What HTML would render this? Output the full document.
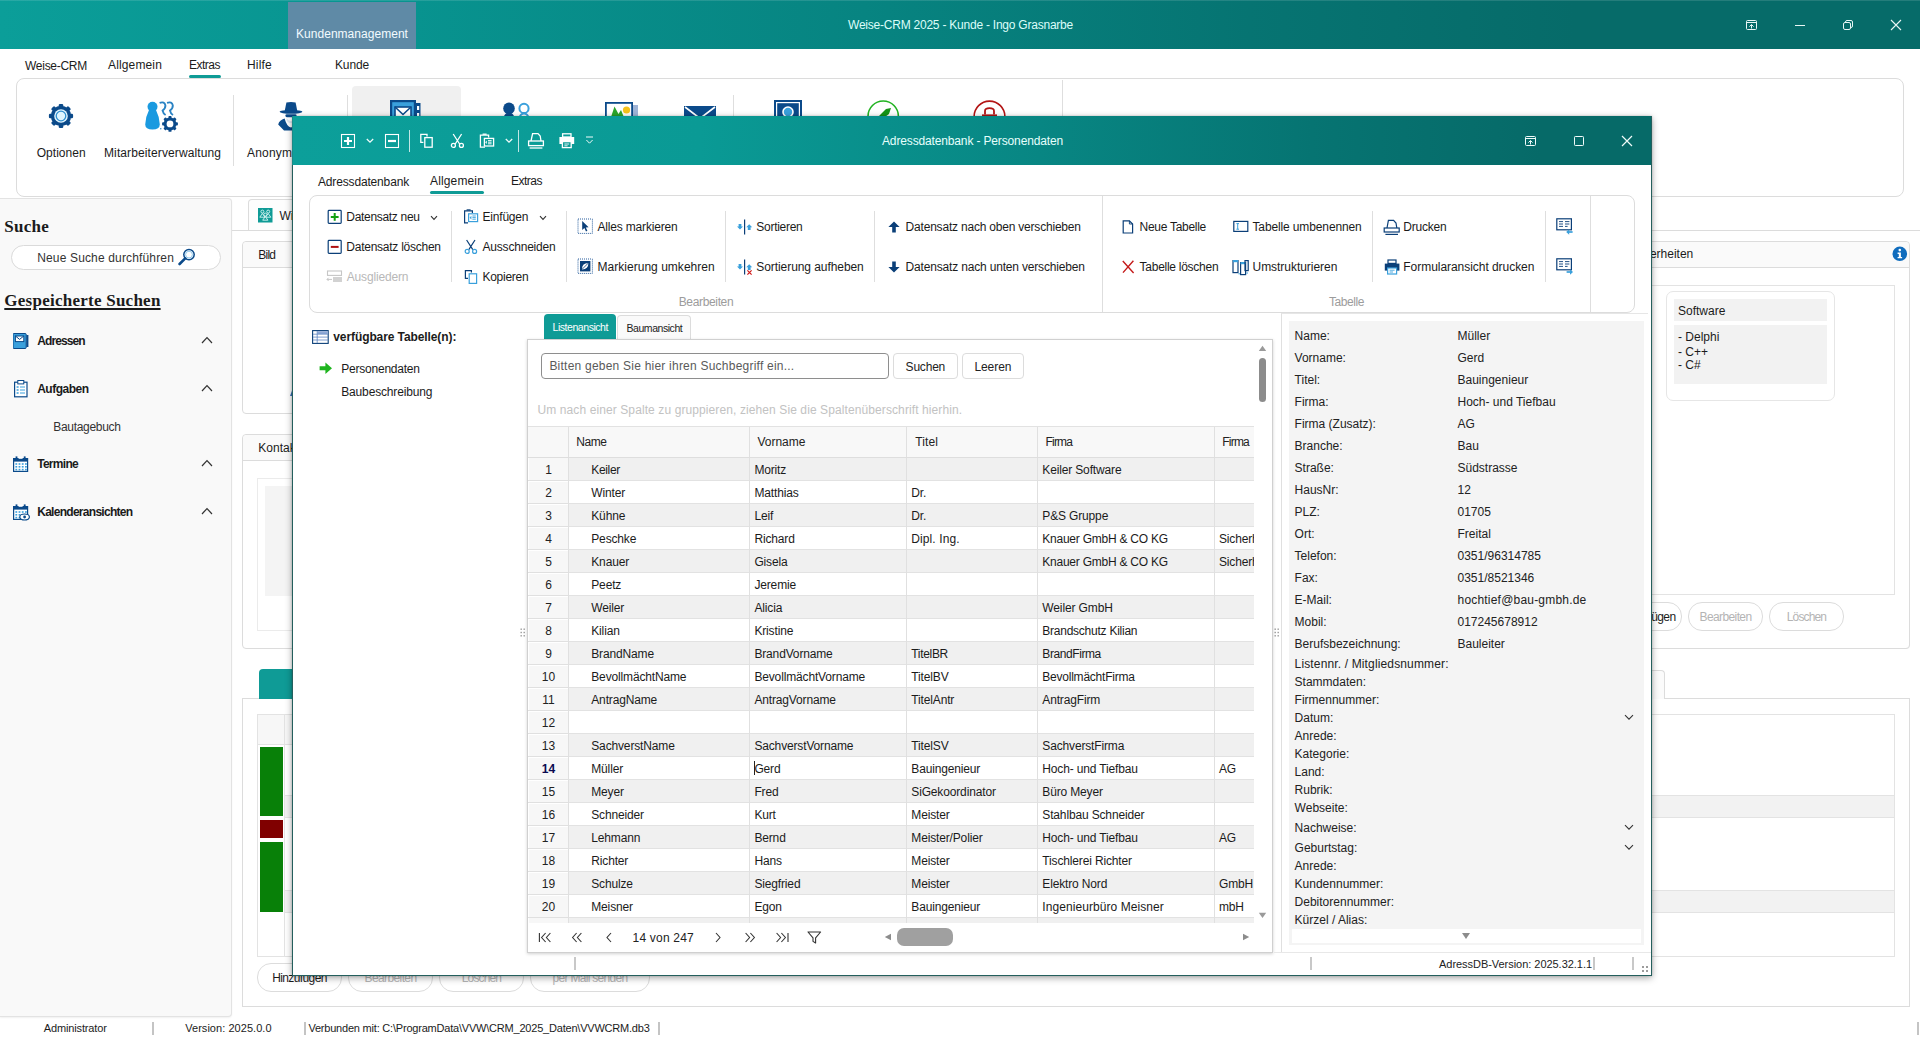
<!DOCTYPE html>
<html lang="de"><head><meta charset="utf-8"><title>Weise-CRM 2025 - Kunde - Ingo Grasnarbe</title>
<style>
html,body{margin:0;padding:0;background:#fff}
body{width:1920px;height:1040px;position:relative;overflow:hidden;font-family:'Liberation Sans', sans-serif;font-size:12px}
div,svg,span.t{position:absolute;box-sizing:border-box}
span.t{white-space:pre;line-height:20px}

</style></head>
<body>
<div style="left:0px;top:0px;width:1920px;height:49px;background:linear-gradient(90deg,#0b9e99 0%,#089490 20%,#078481 45%,#067472 65%,#066b69 82%,#066b69 100%)"></div>
<div style="left:0px;top:0px;width:1920px;height:1px;background:rgba(255,255,255,.12)"></div>
<div style="left:288px;top:2px;width:128px;height:47px;background:#5f8aa6"></div>
<span class="t" style="left:296.00px;top:24.00px;font-size:12px;color:#f2fbff;letter-spacing:0.036px;">Kundenmanagement</span>
<span class="t" style="left:848.00px;top:15.00px;font-size:12px;color:#dcfdf9;letter-spacing:-0.228px;">Weise-CRM 2025 - Kunde - Ingo Grasnarbe</span>
<svg style="left:1745px;top:19px" width="13" height="12" viewBox="0 0 13 12"><rect x="1.5" y="1.5" width="10" height="9" rx="1" stroke="#e8f6f5" fill="none" stroke-width="1"/><line x1="1.5" y1="3.5" x2="11.5" y2="3.5" stroke="#e8f6f5" fill="none" stroke-width="1"/><path d="M6.5 9.5 V5.8 M4.4 7.6 L6.5 5.5 L8.6 7.6" stroke="#e8f6f5" fill="none" stroke-width="1"/></svg>
<div style="left:1795px;top:25px;width:10px;height:1px;background:#e8f6f5"></div>
<svg style="left:1842px;top:19px" width="12" height="12" viewBox="0 0 12 12"><rect x="1.5" y="3.5" width="7" height="7" rx="1.5" stroke="#e8f6f5" fill="none" stroke-width="1"/><path d="M3.5 3.5 V3 Q3.5 1.5 5 1.5 H9 Q10.5 1.5 10.5 3 V7 Q10.5 8.5 9 8.5 H8.5" stroke="#e8f6f5" fill="none" stroke-width="1"/></svg>
<svg style="left:1890px;top:19px" width="12" height="12" viewBox="0 0 12 12"><path d="M1 1 L11 11 M11 1 L1 11" stroke="#e8f6f5" fill="none" stroke-width="1" style="stroke-width:1.1"/></svg>
<span class="t" style="left:25.00px;top:56.00px;font-size:12px;color:#1b1b1b;letter-spacing:-0.273px;">Weise-CRM</span>
<span class="t" style="left:108.00px;top:55.00px;font-size:12px;color:#1b1b1b;letter-spacing:0.144px;">Allgemein</span>
<span class="t" style="left:189.00px;top:55.00px;font-size:12px;color:#1b1b1b;letter-spacing:-0.503px;">Extras</span>
<div style="left:189px;top:75px;width:32px;height:3px;background:#0f9b96;border-radius:2px"></div>
<span class="t" style="left:247.00px;top:55.00px;font-size:12px;color:#1b1b1b;letter-spacing:0.197px;">Hilfe</span>
<span class="t" style="left:335.00px;top:55.00px;font-size:12px;color:#1b1b1b;letter-spacing:-0.141px;">Kunde</span>
<div style="left:16px;top:78px;width:1888px;height:119px;border:1px solid #dcdcdc;border-radius:8px;background:#fff"></div>
<div style="left:233px;top:95px;width:1px;height:71px;background:#dedede"></div>
<div style="left:347px;top:95px;width:1px;height:71px;background:#dedede"></div>
<div style="left:733px;top:95px;width:1px;height:71px;background:#dedede"></div>
<div style="left:1062px;top:80px;width:1px;height:116px;background:#dedede"></div>
<div style="left:352px;top:86px;width:109px;height:80px;background:#f0f0f0;border-radius:4px"></div>
<svg style="left:47px;top:102px" width="28" height="28" viewBox="0 0 28 28"><circle cx="14" cy="14" r="10.2" fill="#0b4a8a"/><rect x="11.70" y="1.90" width="4.60" height="3.40" rx="1.29" fill="#0b4a8a" transform="rotate(0.0 14 14)"/><rect x="11.70" y="1.90" width="4.60" height="3.40" rx="1.29" fill="#0b4a8a" transform="rotate(45.0 14 14)"/><rect x="11.70" y="1.90" width="4.60" height="3.40" rx="1.29" fill="#0b4a8a" transform="rotate(90.0 14 14)"/><rect x="11.70" y="1.90" width="4.60" height="3.40" rx="1.29" fill="#0b4a8a" transform="rotate(135.0 14 14)"/><rect x="11.70" y="1.90" width="4.60" height="3.40" rx="1.29" fill="#0b4a8a" transform="rotate(180.0 14 14)"/><rect x="11.70" y="1.90" width="4.60" height="3.40" rx="1.29" fill="#0b4a8a" transform="rotate(225.0 14 14)"/><rect x="11.70" y="1.90" width="4.60" height="3.40" rx="1.29" fill="#0b4a8a" transform="rotate(270.0 14 14)"/><rect x="11.70" y="1.90" width="4.60" height="3.40" rx="1.29" fill="#0b4a8a" transform="rotate(315.0 14 14)"/><circle cx="14" cy="14" r="6.8" fill="#e4f6ff"/><circle cx="14" cy="14" r="4.8" fill="#dff5ff" stroke="#2f8fd0" stroke-width="1.3"/></svg>
<span class="t" style="left:36.70px;top:143.00px;font-size:12px;color:#1b1b1b;letter-spacing:0.037px;">Optionen</span>
<svg style="left:144px;top:100px" width="36" height="34" viewBox="0 0 36 34"><circle cx="8.5" cy="6.8" r="5" fill="#1a9ae0"/><path d="M5.2 9.5 Q8.5 12 11.8 9.5 Q15.6 17 15.8 24.5 Q15.6 29.6 8.5 29.6 Q1.4 29.6 1.2 24.5 Q1.4 17 5.2 9.5 Z" fill="#1a9ae0"/><path d="M15.6 2.9 Q20.6 1.2 21.4 5.4 Q21.6 8.4 18.6 10.6 Q19.2 13.6 21.6 15" fill="none" stroke="#2a83c4" stroke-width="1.9"/><path d="M23 2.9 Q28 1.2 28.8 5.4 Q29 8.4 26 10.6 Q26.6 13.6 29 15" fill="none" stroke="#2a83c4" stroke-width="1.9"/><circle cx="26" cy="23.9" r="6.4" fill="#0b4a8a"/><rect x="24.45" y="16.00" width="3.10" height="3.00" rx="0.87" fill="#0b4a8a" transform="rotate(0.0 26 23.9)"/><rect x="24.45" y="16.00" width="3.10" height="3.00" rx="0.87" fill="#0b4a8a" transform="rotate(45.0 26 23.9)"/><rect x="24.45" y="16.00" width="3.10" height="3.00" rx="0.87" fill="#0b4a8a" transform="rotate(90.0 26 23.9)"/><rect x="24.45" y="16.00" width="3.10" height="3.00" rx="0.87" fill="#0b4a8a" transform="rotate(135.0 26 23.9)"/><rect x="24.45" y="16.00" width="3.10" height="3.00" rx="0.87" fill="#0b4a8a" transform="rotate(180.0 26 23.9)"/><rect x="24.45" y="16.00" width="3.10" height="3.00" rx="0.87" fill="#0b4a8a" transform="rotate(225.0 26 23.9)"/><rect x="24.45" y="16.00" width="3.10" height="3.00" rx="0.87" fill="#0b4a8a" transform="rotate(270.0 26 23.9)"/><rect x="24.45" y="16.00" width="3.10" height="3.00" rx="0.87" fill="#0b4a8a" transform="rotate(315.0 26 23.9)"/><circle cx="26" cy="23.9" r="3.4" fill="#fff"/><circle cx="16.8" cy="28.8" r="0.7" fill="#2a83c4"/></svg>
<span class="t" style="left:104.00px;top:143.00px;font-size:12px;color:#1b1b1b;letter-spacing:0.109px;">Mitarbeiterverwaltung</span>
<svg style="left:276px;top:100px" width="30" height="34" viewBox="0 0 30 34"><path d="M8.6 11.4 L10.4 2.6 Q15 1.2 19.6 2.6 L21.4 11.4 Z" fill="#0b4a8a"/><ellipse cx="15" cy="11.8" rx="11.4" ry="1.9" fill="#0b4a8a"/><rect x="9.4" y="14.2" width="11.2" height="3" rx="1.4" fill="#0b4a8a"/><path d="M10.6 18 Q15 24.5 19.4 18 L19.4 21 Q15 25.4 10.6 21 Z" fill="#dfe8f3"/><path d="M8.6 18.6 Q3.4 20 2.2 24.4 L8 30.4 H22 L27.8 24.4 Q26.6 20 21.4 18.6 Q19 27.4 15 27.4 Q11 27.4 8.6 18.6 Z" fill="#0b4a8a"/></svg>
<span class="t" style="left:247.00px;top:143.00px;font-size:12px;color:#1b1b1b;letter-spacing:0.202px;">Anonymisieren</span>
<svg style="left:390px;top:100px" width="31" height="30" viewBox="0 0 31 30"><rect x="0" y="0" width="26" height="30" fill="#0b4a8a"/><rect x="2.2" y="2.2" width="21.6" height="25.6" fill="#3aa0dc"/><rect x="26" y="3" width="4.5" height="24" fill="#0b4a8a"/><rect x="27" y="6" width="2.2" height="4" fill="#fff"/><rect x="27" y="13" width="2.2" height="4" fill="#fff"/><rect x="5" y="7" width="16" height="12" fill="#fff" stroke="#0b4a8a" stroke-width="1.6"/><path d="M5 7 L13 14.5 L21 7" fill="none" stroke="#0b4a8a" stroke-width="1.6"/></svg>
<svg style="left:502px;top:102px" width="30" height="30" viewBox="0 0 30 30"><circle cx="7" cy="6.4" r="5.8" fill="#0b4a8a"/><path d="M0 26 Q0 10.5 7 10.5 Q14 10.5 14 26 Z" fill="#0b4a8a"/><circle cx="22" cy="6.4" r="4.6" fill="#fff" stroke="#3aa0dc" stroke-width="2"/><path d="M16 26 Q16 11.5 22 11.5 Q28 11.5 28 26" fill="none" stroke="#3aa0dc" stroke-width="2"/></svg>
<svg style="left:605px;top:102px" width="34" height="28" viewBox="0 0 34 28"><rect x="4" y="3" width="29" height="25" fill="#9fb4d6"/><rect x="0.9" y="0.9" width="26.2" height="24" fill="#fff" stroke="#0b4a8a" stroke-width="1.8"/><path d="M3 24 L9.5 4.6 L13.5 12 L16 8 L22.5 24 Z" fill="#2aa52a"/><circle cx="21.5" cy="8" r="3.6" fill="#f5c21b"/></svg>
<svg style="left:684px;top:106px" width="33" height="24" viewBox="0 0 33 24"><rect x="0" y="0" width="32" height="24" fill="#0b4a8a"/><path d="M1 1 L16 12.5 L31 1" fill="none" stroke="#fff" stroke-width="1.6"/></svg>
<svg style="left:774px;top:100px" width="29" height="30" viewBox="0 0 29 30"><rect x="0" y="0" width="28" height="30" fill="#0b4a8a"/><rect x="2.6" y="2.6" width="22.8" height="25" fill="none" stroke="#fff" stroke-width="1.2"/><circle cx="14" cy="12" r="5" fill="#3aa0dc" stroke="#fff" stroke-width="1.6"/></svg>
<svg style="left:867px;top:100px" width="33" height="33" viewBox="0 0 33 33"><circle cx="16.2" cy="16.2" r="15.2" fill="#fff" stroke="#21b321" stroke-width="1.6"/><path d="M10 18 L19 9 L24 8 L22 14 L14 20 Z" fill="#169416"/></svg>
<svg style="left:973px;top:100px" width="34" height="34" viewBox="0 0 34 34"><circle cx="16.5" cy="16.5" r="15.4" fill="#fff" stroke="#b31515" stroke-width="1.6"/><path d="M12 14.5 V11 Q12 8.2 16.5 8.2 Q21 8.2 21 11 V14.5" fill="none" stroke="#b31515" stroke-width="1.8"/><rect x="9" y="14.4" width="15" height="10" fill="#b31515"/></svg>
<div style="left:0px;top:198px;width:232px;height:819px;background:#f9f9f9;border:1px solid #e3e3e3;border-left:none;border-radius:0 4px 4px 0;box-shadow:0 1px 2px rgba(0,0,0,.06)"></div>
<span class="t" style="left:4.30px;top:216.70px;font-size:17px;color:#1b1b1b;font-weight:bold;font-family:'Liberation Serif', serif;letter-spacing:0.246px;">Suche</span>
<div style="left:11px;top:245px;width:210px;height:25px;background:#fff;border:1px solid #dadada;border-radius:13px"></div>
<span class="t" style="left:37.20px;top:247.60px;font-size:12px;color:#333;letter-spacing:0.153px;">Neue Suche durchführen</span>
<svg style="left:178px;top:248px" width="18" height="18" viewBox="0 0 18 18"><circle cx="11" cy="6.6" r="5.2" fill="#fff" stroke="#0b4a8a" stroke-width="1.5"/><circle cx="11" cy="6.6" r="3.4" fill="none" stroke="#8ec9ee" stroke-width="1"/><path d="M7.2 10.4 L1.6 16" stroke="#0b4a8a" stroke-width="2.6" stroke-linecap="round"/></svg>
<span class="t" style="left:4.30px;top:291.10px;font-size:17px;color:#1b1b1b;font-weight:bold;font-family:'Liberation Serif', serif;letter-spacing:0.249px;text-decoration:underline;text-decoration-thickness:1.5px;text-underline-offset:2px;">Gespeicherte Suchen</span>
<svg style="left:13px;top:333px" width="16" height="16" viewBox="0 0 16 16"><rect x="0" y="0.5" width="13.2" height="15" rx="1" fill="#3aa0dc" stroke="#0b4a8a" stroke-width="1"/><rect x="13.4" y="2" width="2" height="12" fill="#0b4a8a"/><rect x="2.4" y="3" width="8.4" height="5.6" fill="#fff" stroke="#0b4a8a" stroke-width="1"/><path d="M2.4 3 L6.6 6.4 L10.8 3" fill="none" stroke="#0b4a8a" stroke-width="1"/></svg>
<span class="t" style="left:37.20px;top:330.70px;font-size:12px;color:#1b1b1b;font-weight:bold;letter-spacing:-0.888px;">Adressen</span>
<svg style="left:201px;top:336px" width="12" height="9" viewBox="0 0 12 9"><path d="M1 7 L6 1.6 L11 7" fill="none" stroke="#333" stroke-width="1.2"/></svg>
<svg style="left:14px;top:380px" width="14" height="18" viewBox="0 0 14 18"><rect x="0.6" y="2.2" width="12.4" height="14.6" fill="#fff" stroke="#0b4a8a" stroke-width="1.2"/><rect x="3.8" y="0.5" width="6" height="3.4" fill="#fff" stroke="#0b4a8a" stroke-width="1"/><path d="M2.6 7 h2 M2.6 10 h2 M2.6 13 h2" stroke="#3aa0dc" stroke-width="1.3"/><path d="M6 7 h5 M6 10 h5 M6 13 h5" stroke="#3aa0dc" stroke-width="1"/></svg>
<span class="t" style="left:37.20px;top:378.50px;font-size:12px;color:#1b1b1b;font-weight:bold;letter-spacing:-0.493px;">Aufgaben</span>
<svg style="left:201px;top:384px" width="12" height="9" viewBox="0 0 12 9"><path d="M1 7 L6 1.6 L11 7" fill="none" stroke="#333" stroke-width="1.2"/></svg>
<span class="t" style="left:53.30px;top:417.00px;font-size:12px;color:#333;letter-spacing:-0.312px;">Bautagebuch</span>
<svg style="left:13px;top:456px" width="16" height="16" viewBox="0 0 16 16"><rect x="0.6" y="2.6" width="14" height="12.8" fill="#fff" stroke="#0b4a8a" stroke-width="1.2"/><rect x="0.6" y="2.6" width="14" height="3" fill="#0b4a8a"/><rect x="2.6" y="0.4" width="1.8" height="3.6" fill="#0b4a8a"/><rect x="10.8" y="0.4" width="1.8" height="3.6" fill="#0b4a8a"/><rect x="5.6" y="0.8" width="4" height="2" fill="#fff"/><rect x="2.4" y="7.2" width="1.8" height="1.6" fill="#3aa0dc"/><rect x="2.4" y="10.0" width="1.8" height="1.6" fill="#3aa0dc"/><rect x="2.4" y="12.8" width="1.8" height="1.6" fill="#3aa0dc"/><rect x="5.6" y="7.2" width="1.8" height="1.6" fill="#3aa0dc"/><rect x="5.6" y="10.0" width="1.8" height="1.6" fill="#3aa0dc"/><rect x="5.6" y="12.8" width="1.8" height="1.6" fill="#3aa0dc"/><rect x="8.8" y="7.2" width="1.8" height="1.6" fill="#3aa0dc"/><rect x="8.8" y="10.0" width="1.8" height="1.6" fill="#3aa0dc"/><rect x="8.8" y="12.8" width="1.8" height="1.6" fill="#3aa0dc"/><rect x="12.000000000000002" y="7.2" width="1.8" height="1.6" fill="#3aa0dc"/><rect x="12.000000000000002" y="10.0" width="1.8" height="1.6" fill="#3aa0dc"/><rect x="12.000000000000002" y="12.8" width="1.8" height="1.6" fill="#3aa0dc"/></svg>
<span class="t" style="left:37.20px;top:453.80px;font-size:12px;color:#1b1b1b;font-weight:bold;letter-spacing:-0.714px;">Termine</span>
<svg style="left:201px;top:459px" width="12" height="9" viewBox="0 0 12 9"><path d="M1 7 L6 1.6 L11 7" fill="none" stroke="#333" stroke-width="1.2"/></svg>
<svg style="left:13px;top:504px" width="17" height="17" viewBox="0 0 17 17"><rect x="0.6" y="2.6" width="14" height="12.8" fill="#fff" stroke="#0b4a8a" stroke-width="1.2"/><rect x="0.6" y="2.6" width="14" height="3" fill="#0b4a8a"/><rect x="2.6" y="0.4" width="1.8" height="3.6" fill="#0b4a8a"/><rect x="10.8" y="0.4" width="1.8" height="3.6" fill="#0b4a8a"/><rect x="5.6" y="0.8" width="4" height="2" fill="#fff"/><rect x="2.4" y="7.2" width="1.8" height="1.6" fill="#3aa0dc"/><rect x="2.4" y="10.0" width="1.8" height="1.6" fill="#3aa0dc"/><rect x="2.4" y="12.8" width="1.8" height="1.6" fill="#3aa0dc"/><rect x="5.6" y="7.2" width="1.8" height="1.6" fill="#3aa0dc"/><rect x="5.6" y="10.0" width="1.8" height="1.6" fill="#3aa0dc"/><rect x="5.6" y="12.8" width="1.8" height="1.6" fill="#3aa0dc"/><rect x="8.8" y="7.2" width="1.8" height="1.6" fill="#3aa0dc"/><rect x="8.8" y="10.0" width="1.8" height="1.6" fill="#3aa0dc"/><rect x="8.8" y="12.8" width="1.8" height="1.6" fill="#3aa0dc"/><rect x="12.000000000000002" y="7.2" width="1.8" height="1.6" fill="#3aa0dc"/><rect x="12.000000000000002" y="10.0" width="1.8" height="1.6" fill="#3aa0dc"/><rect x="12.000000000000002" y="12.8" width="1.8" height="1.6" fill="#3aa0dc"/><ellipse cx="11.6" cy="13" rx="4.8" ry="3" fill="#fff" stroke="#0b4a8a" stroke-width="1.2"/><circle cx="11.6" cy="13" r="1.4" fill="#0b4a8a"/></svg>
<span class="t" style="left:37.20px;top:502.00px;font-size:12px;color:#1b1b1b;font-weight:bold;letter-spacing:-0.716px;">Kalenderansichten</span>
<svg style="left:201px;top:507px" width="12" height="9" viewBox="0 0 12 9"><path d="M1 7 L6 1.6 L11 7" fill="none" stroke="#333" stroke-width="1.2"/></svg>
<div style="left:248px;top:199px;width:130px;height:32px;background:#fdfdfd;border:1px solid #dcdcdc;border-bottom:none;border-radius:4px 4px 0 0"></div>
<svg style="left:258px;top:208px" width="15" height="15" viewBox="0 0 15 15"><rect width="14.5" height="14.5" fill="#0f9b96"/><g fill="none" stroke="#d9f5f3" stroke-width="0.9" stroke-linejoin="round"><circle cx="4.4" cy="3.6" r="1.5"/><path d="M1.8000000000000003 9.2 L4.4 5.5 L7.0 9.2 Z"/><circle cx="10.2" cy="3.6" r="1.5"/><path d="M7.6 9.2 L10.2 5.5 L12.799999999999999 9.2 Z"/><circle cx="7.3" cy="6.6" r="1.5"/><path d="M4.699999999999999 12.2 L7.3 8.5 L9.9 12.2 Z"/></g></svg>
<span class="t" style="left:279.50px;top:205.50px;font-size:12px;color:#1b1b1b;">Wichtige Daten</span>
<div style="left:232px;top:230px;width:1688px;height:1px;background:#dcdcdc"></div>
<div style="left:242px;top:241px;width:760px;height:173px;border:1px solid #dcdcdc;border-radius:4px;background:#fff"></div>
<div style="left:243px;top:242px;width:758px;height:26px;background:#fafafa;border-bottom:1px solid #dcdcdc;border-radius:4px 4px 0 0"></div>
<span class="t" style="left:258.30px;top:244.50px;font-size:12px;color:#1b1b1b;letter-spacing:-0.754px;">Bild</span>
<svg style="left:288px;top:380px" width="8" height="16" viewBox="0 0 8 16"><path d="M8 0 L2 16 L8 16 Z" fill="#3a6fb5"/></svg>
<div style="left:242px;top:434px;width:1668px;height:215px;border:1px solid #dcdcdc;border-radius:4px;background:#fff"></div>
<div style="left:243px;top:435px;width:1666px;height:26px;background:#fafafa;border-bottom:1px solid #dcdcdc;border-radius:4px 4px 0 0"></div>
<span class="t" style="left:258.30px;top:438.00px;font-size:12px;color:#1b1b1b;">Kontakt</span>
<div style="left:257px;top:478px;width:700px;height:153px;border:1px solid #ebebeb;background:#fff"></div>
<div style="left:265px;top:486px;width:300px;height:110px;background:#f4f4f4"></div>
<div style="left:1010px;top:241px;width:900px;height:408px;border:1px solid #dcdcdc;border-radius:4px;background:#fff"></div>
<div style="left:1011px;top:242px;width:898px;height:26px;background:#fafafa;border-bottom:1px solid #dcdcdc;border-radius:4px 4px 0 0"></div>
<span class="t" style="left:1609.22px;top:244.20px;font-size:12px;color:#1b1b1b;">Besonderheiten</span>
<svg style="left:1892px;top:246px" width="16" height="16" viewBox="0 0 16 16"><circle cx="7.8" cy="7.8" r="7.3" fill="#0f6cbd"/><circle cx="7.8" cy="4.1" r="1.3" fill="#fff"/><path d="M5.6 6.6 H8.9 V11 H10.1 V12.3 H5.6 V11 H6.8 V7.9 H5.6 Z" fill="#fff"/></svg>
<div style="left:1026px;top:285px;width:869px;height:310px;border:1px solid #e3e3e3;background:#fff"></div>
<div style="left:1666px;top:291px;width:169px;height:110px;border:1px solid #e6e6e6;border-radius:7px;background:#fff"></div>
<div style="left:1674px;top:299px;width:153px;height:22px;background:#f2f2f2"></div>
<span class="t" style="left:1678.00px;top:300.70px;font-size:12px;color:#1b1b1b;">Software</span>
<div style="left:1674px;top:325px;width:153px;height:59px;background:#f2f2f2"></div>
<span class="t" style="left:1678.00px;top:326.70px;font-size:12px;color:#1b1b1b;">- Delphi</span>
<span class="t" style="left:1678.00px;top:341.50px;font-size:12px;color:#1b1b1b;">- C++</span>
<span class="t" style="left:1678.00px;top:354.80px;font-size:12px;color:#1b1b1b;">- C#</span>
<div style="left:1600px;top:602px;width:82px;height:29px;border:1px solid #dcdcdc;border-radius:14px;background:#fff"></div>
<span class="t" style="left:1620.80px;top:607.00px;font-size:12px;color:#1b1b1b;letter-spacing:-0.602px;">Hinzufügen</span>
<div style="left:1688px;top:602px;width:75px;height:29px;border:1px solid #dcdcdc;border-radius:14px;background:#fff"></div>
<span class="t" style="left:1699.50px;top:607.00px;font-size:12px;color:#b4b4b4;letter-spacing:-0.605px;">Bearbeiten</span>
<div style="left:1769px;top:602px;width:75px;height:29px;border:1px solid #dcdcdc;border-radius:14px;background:#fff"></div>
<span class="t" style="left:1786.80px;top:607.00px;font-size:12px;color:#b4b4b4;letter-spacing:-0.854px;">Löschen</span>
<div style="left:242px;top:698px;width:1668px;height:309px;border:1px solid #dcdcdc;background:#fff"></div>
<div style="left:259px;top:669px;width:160px;height:30px;background:#0f9b96;border-radius:4px 4px 0 0"></div>
<div style="left:1500px;top:670px;width:165px;height:29px;background:#fbfbfb;border:1px solid #dcdcdc;border-bottom:none;border-radius:4px 4px 0 0"></div>
<div style="left:257px;top:714px;width:1638px;height:243px;border:1px solid #e3e3e3;background:#fff"></div>
<div style="left:258px;top:715px;width:1300px;height:30px;background:#f7f7f7;border-bottom:1px solid #e3e3e3"></div>
<div style="left:284px;top:715px;width:1px;height:241px;background:#e3e3e3"></div>
<div style="left:285px;top:795px;width:1609px;height:23px;background:#f2f2f2;border-top:1px solid #e3e3e3;border-bottom:1px solid #e3e3e3"></div>
<div style="left:285px;top:890px;width:1609px;height:23px;background:#f2f2f2;border-top:1px solid #e3e3e3;border-bottom:1px solid #e3e3e3"></div>
<div style="left:260px;top:747px;width:23px;height:69px;background:#088008"></div>
<div style="left:260px;top:820px;width:23px;height:18px;background:#800000"></div>
<div style="left:260px;top:842px;width:23px;height:70px;background:#088008"></div>
<div style="left:257px;top:963px;width:85px;height:29px;border:1px solid #dcdcdc;border-radius:14px;background:#fff"></div>
<span class="t" style="left:272.15px;top:968.00px;font-size:12px;color:#1b1b1b;letter-spacing:-0.602px;">Hinzufügen</span>
<div style="left:348px;top:963px;width:85px;height:29px;border:1px solid #dcdcdc;border-radius:14px;background:#fff"></div>
<span class="t" style="left:364.50px;top:968.00px;font-size:12px;color:#b4b4b4;letter-spacing:-0.605px;">Bearbeiten</span>
<div style="left:439px;top:963px;width:85px;height:29px;border:1px solid #dcdcdc;border-radius:14px;background:#fff"></div>
<span class="t" style="left:461.80px;top:968.00px;font-size:12px;color:#b4b4b4;letter-spacing:-0.854px;">Löschen</span>
<div style="left:530px;top:963px;width:120px;height:29px;border:1px solid #dcdcdc;border-radius:14px;background:#fff"></div>
<span class="t" style="left:552.50px;top:968.00px;font-size:12px;color:#b4b4b4;letter-spacing:-0.693px;">per Mail senden</span>
<span class="t" style="left:43.70px;top:1017.60px;font-size:11px;color:#1b1b1b;letter-spacing:-0.131px;">Administrator</span>
<div style="left:152px;top:1022px;width:2px;height:13px;background:#c4c4c4"></div>
<span class="t" style="left:185.20px;top:1017.60px;font-size:11px;color:#1b1b1b;letter-spacing:0.046px;">Version: 2025.0.0</span>
<div style="left:304px;top:1022px;width:2px;height:13px;background:#c4c4c4"></div>
<span class="t" style="left:308.40px;top:1017.60px;font-size:11px;color:#1b1b1b;letter-spacing:-0.206px;">Verbunden mit: C:\ProgramData\VVW\CRM_2025_Daten\VVWCRM.db3</span>
<div style="left:658px;top:1022px;width:2px;height:13px;background:#c4c4c4"></div>
<div style="left:1917px;top:1022px;width:2px;height:13px;background:#c4c4c4"></div>
<div style="left:292px;top:116px;width:1360px;height:860px;background:#fff;box-shadow:0 2px 7px 0 rgba(0,0,0,.34), 0 0 2px rgba(0,0,0,.18);border:1px solid #245f5d;border-top:none"></div>
<div style="left:292px;top:116px;width:1360px;height:49px;border-right:1px solid #245f5d;border-left:1px solid #1b8a86;background:linear-gradient(90deg,#0c9f9a 0%,#0a9a95 30%,#088683 55%,#067472 75%,#066a68 92%,#066a68 100%)"></div>
<span class="t" style="left:882.00px;top:131.00px;font-size:12px;color:#e6fffc;letter-spacing:-0.144px;">Adressdatenbank - Personendaten</span>
<svg style="left:340px;top:133px" width="16" height="16" viewBox="0 0 16 16"><rect x="1.5" y="1.5" width="13" height="13" stroke="#fff" fill="none" stroke-width="1.3" style="stroke-width:1.1"/><path d="M8 4 V12 M4 8 H12" stroke="#fff" fill="none" stroke-width="1.3" style="stroke-width:2.2"/></svg>
<svg style="left:366px;top:138px" width="8" height="6" viewBox="0 0 8 6"><path d="M0.8 1 L4 4.2 L7.2 1" stroke="#f0fbfa" fill="none" stroke-width="1" style="stroke-width:1.3"/></svg>
<svg style="left:384px;top:133px" width="16" height="16" viewBox="0 0 16 16"><rect x="1.5" y="1.5" width="13" height="13" stroke="#fff" fill="none" stroke-width="1.3" style="stroke-width:1.1"/><path d="M4 8 H12" stroke="#fff" fill="none" stroke-width="1.3" style="stroke-width:2.2"/></svg>
<div style="left:409px;top:130px;width:1px;height:22px;background:rgba(255,255,255,.75)"></div>
<svg style="left:419px;top:133px" width="16" height="16" viewBox="0 0 16 16"><path d="M4.4 9.4 H1.8 V1.4 H8 V3.6" stroke="#fff" fill="none" stroke-width="1.3"/><rect x="5.8" y="4.6" width="7.4" height="9.6" stroke="#fff" fill="none" stroke-width="1.3"/></svg>
<svg style="left:450px;top:133px" width="15" height="16" viewBox="0 0 15 16"><path d="M3.2 1 L9.6 11 M11.6 1 L5.2 11" stroke="#fff" fill="none" stroke-width="1.3"/><circle cx="3.4" cy="12.4" r="2" stroke="#fff" fill="none" stroke-width="1.3"/><circle cx="11.4" cy="12.4" r="2" stroke="#fff" fill="none" stroke-width="1.3"/></svg>
<svg style="left:479px;top:133px" width="16" height="16" viewBox="0 0 16 16"><path d="M6 14.2 H1.4 V2.2 H9.6 V4.4" stroke="#fff" fill="none" stroke-width="1.3"/><path d="M3.6 1.2 H7.6" stroke="#fff" fill="none" stroke-width="1.3"/><rect x="5.4" y="5.4" width="9.2" height="7.6" stroke="#fff" fill="none" stroke-width="1.3"/><path d="M9 7.6 H12.6 M9 9.2 H12.6 M9 10.8 H12.6" stroke="#f0fbfa" fill="none" stroke-width="1"/><path d="M7.8 7.4 L6.2 9.2 L7.8 11 Z" fill="#fff"/></svg>
<svg style="left:505px;top:138px" width="8" height="6" viewBox="0 0 8 6"><path d="M0.8 1 L4 4.2 L7.2 1" stroke="#f0fbfa" fill="none" stroke-width="1" style="stroke-width:1.3"/></svg>
<div style="left:518px;top:130px;width:1px;height:22px;background:rgba(255,255,255,.75)"></div>
<svg style="left:527px;top:132px" width="18" height="18" viewBox="0 0 18 18"><path d="M4 9 L5.6 1.6 H11 L13.2 4 L14 9" stroke="#fff" fill="none" stroke-width="1.3"/><rect x="1.6" y="9" width="14.8" height="4.6" stroke="#fff" fill="none" stroke-width="1.3"/><path d="M2.6 16 H15.4" stroke="#fff" fill="none" stroke-width="1.3"/></svg>
<svg style="left:558px;top:132px" width="18" height="18" viewBox="0 0 18 18"><rect x="4.6" y="1.8" width="8.4" height="3.2" stroke="#fff" fill="none" stroke-width="1.3"/><rect x="1.4" y="5" width="14.8" height="7" fill="#fff"/><rect x="4.4" y="9.6" width="8.8" height="6" fill="#0a9a95" stroke="#fff" stroke-width="1.3"/><path d="M6.4 12 H11.2 M6.4 13.8 H9.6" stroke="#fff" stroke-width="0.9"/></svg>
<svg style="left:585px;top:136px" width="9" height="10" viewBox="0 0 9 10"><path d="M1 1 H8" stroke="#f0fbfa" fill="none" stroke-width="1"/><path d="M1.4 4 L4.5 7.2 L7.6 4" stroke="#f0fbfa" fill="none" stroke-width="1"/></svg>
<svg style="left:1524px;top:135px" width="13" height="12" viewBox="0 0 13 12"><rect x="1.5" y="1.5" width="10" height="9" rx="1" stroke="#f0fbfa" fill="none" stroke-width="1"/><line x1="1.5" y1="3.5" x2="11.5" y2="3.5" stroke="#f0fbfa" fill="none" stroke-width="1"/><path d="M6.5 9.5 V5.8 M4.4 7.6 L6.5 5.5 L8.6 7.6" stroke="#f0fbfa" fill="none" stroke-width="1"/></svg>
<svg style="left:1573px;top:135px" width="12" height="12" viewBox="0 0 12 12"><rect x="1.5" y="1.5" width="9" height="9" rx="0.8" stroke="#f0fbfa" fill="none" stroke-width="1"/></svg>
<svg style="left:1621px;top:135px" width="12" height="12" viewBox="0 0 12 12"><path d="M1 1 L11 11 M11 1 L1 11" stroke="#f0fbfa" fill="none" stroke-width="1" style="stroke-width:1.2"/></svg>
<span class="t" style="left:318.00px;top:171.50px;font-size:12px;color:#1b1b1b;letter-spacing:-0.160px;">Adressdatenbank</span>
<span class="t" style="left:430.00px;top:170.50px;font-size:12px;color:#1b1b1b;letter-spacing:0.144px;">Allgemein</span>
<div style="left:430px;top:191px;width:54px;height:3px;background:#0f9b96;border-radius:2px"></div>
<span class="t" style="left:511.00px;top:170.50px;font-size:12px;color:#1b1b1b;letter-spacing:-0.503px;">Extras</span>
<div style="left:309px;top:195px;width:1326px;height:118px;border:1px solid #dcdcdc;border-radius:8px;background:#fff"></div>
<div style="left:451px;top:211px;width:1px;height:71px;background:#dedede"></div>
<div style="left:566px;top:211px;width:1px;height:71px;background:#dedede"></div>
<div style="left:725px;top:211px;width:1px;height:71px;background:#dedede"></div>
<div style="left:874px;top:211px;width:1px;height:71px;background:#dedede"></div>
<div style="left:1372px;top:211px;width:1px;height:71px;background:#dedede"></div>
<div style="left:1545px;top:211px;width:1px;height:71px;background:#dedede"></div>
<div style="left:1102px;top:196px;width:1px;height:116px;background:#dedede"></div>
<div style="left:1590px;top:196px;width:1px;height:116px;background:#dedede"></div>
<svg style="left:327px;top:209px" width="16" height="16" viewBox="0 0 16 16"><rect x="1.2" y="1.4" width="13" height="13" rx="0.8" fill="#fff" stroke="#0b3f78" fill="none" stroke-width="1.2"/><path d="M7.7 4 V11.8 M3.8 7.9 H11.6" stroke="#12a012" stroke-width="2" fill="none"/></svg>
<span class="t" style="left:346.30px;top:206.80px;font-size:12px;color:#1b1b1b;letter-spacing:-0.307px;">Datensatz neu</span>
<svg style="left:430px;top:215px" width="8" height="6" viewBox="0 0 8 6"><path d="M1 1.2 L4 4.4 L7 1.2" fill="none" stroke="#333" stroke-width="1.1"/></svg>
<svg style="left:327px;top:239px" width="16" height="16" viewBox="0 0 16 16"><rect x="1.2" y="1.4" width="13" height="13" rx="0.8" fill="#fff" stroke="#0b3f78" fill="none" stroke-width="1.2"/><path d="M3.8 7.9 H11.6" stroke="#b01010" stroke-width="2" fill="none"/></svg>
<span class="t" style="left:346.30px;top:236.80px;font-size:12px;color:#1b1b1b;letter-spacing:-0.249px;">Datensatz löschen</span>
<svg style="left:326px;top:270px" width="17" height="13" viewBox="0 0 17 13"><rect x="1.5" y="1" width="14" height="4.4" fill="#fff" stroke="#c6c6c6" stroke-width="1.1"/><rect x="7" y="7" width="9" height="5" fill="#d2d2d2"/><path d="M1 9.4 H6 M2.6 7.8 L1 9.4 L2.6 11" stroke="#c6c6c6" fill="none" stroke-width="1"/></svg>
<span class="t" style="left:346.70px;top:266.80px;font-size:12px;color:#b8b8b8;letter-spacing:-0.161px;">Ausgliedern</span>
<svg style="left:463px;top:209px" width="16" height="16" viewBox="0 0 16 16"><path d="M5 13.8 H1.6 V1.8 H9.4 V4" stroke="#0b3f78" fill="none" stroke-width="1.2"/><path d="M3.6 0.9 H7.6" stroke="#0b3f78" fill="none" stroke-width="1.2"/><rect x="5.6" y="4.8" width="9" height="7.8" fill="#fff" stroke="#3aa0dc" stroke-width="1.2"/><path d="M9.4 7 H12.8 M9.4 8.6 H12.8 M9.4 10.2 H12.8" stroke="#3aa0dc" stroke-width="0.9"/><path d="M8.4 6.8 L6.6 8.7 L8.4 10.6 Z" fill="#3aa0dc"/></svg>
<span class="t" style="left:482.50px;top:206.80px;font-size:12px;color:#1b1b1b;letter-spacing:-0.197px;">Einfügen</span>
<svg style="left:539px;top:215px" width="8" height="6" viewBox="0 0 8 6"><path d="M1 1.2 L4 4.4 L7 1.2" fill="none" stroke="#333" stroke-width="1.1"/></svg>
<svg style="left:464px;top:239px" width="14" height="16" viewBox="0 0 14 16"><path d="M2.6 1 L8.8 10.6 M11 1 L4.8 10.6" stroke="#0b3f78" fill="none" stroke-width="1.2"/><circle cx="3.2" cy="12.4" r="2" fill="none" stroke="#3aa0dc" stroke-width="1.2"/><circle cx="10.6" cy="12.4" r="2" fill="none" stroke="#3aa0dc" stroke-width="1.2"/></svg>
<span class="t" style="left:482.50px;top:236.80px;font-size:12px;color:#1b1b1b;letter-spacing:-0.199px;">Ausschneiden</span>
<svg style="left:464px;top:269px" width="14" height="16" viewBox="0 0 14 16"><path d="M4 9.4 H1.4 V1.6 H7.4 V3.6" stroke="#0b3f78" fill="none" stroke-width="1.2"/><rect x="5.2" y="4.8" width="7.4" height="9.6" fill="#fff" stroke="#3aa0dc" stroke-width="1.2"/></svg>
<span class="t" style="left:482.50px;top:266.80px;font-size:12px;color:#1b1b1b;letter-spacing:-0.281px;">Kopieren</span>
<svg style="left:577px;top:218px" width="17" height="17" viewBox="0 0 17 17"><rect x="1" y="1" width="14.4" height="14.4" fill="#fff" stroke="#2a5f9e" stroke-width="1" stroke-dasharray="1 1"/><path d="M5.2 3 L5.2 12 L7.4 10 L9 13.4 L10.4 12.8 L8.8 9.4 L11.6 9.2 Z" fill="#0b3f78"/></svg>
<span class="t" style="left:597.50px;top:216.50px;font-size:12px;color:#1b1b1b;letter-spacing:-0.180px;">Alles markieren</span>
<svg style="left:577px;top:258px" width="17" height="17" viewBox="0 0 17 17"><rect x="1" y="1" width="14.4" height="14.4" fill="#fff" stroke="#2a5f9e" stroke-width="1" stroke-dasharray="1 1"/><rect x="3" y="3" width="10.4" height="10.4" fill="#0b3f78"/><path d="M5 11.4 Q5 5 11.4 5 Q11.4 11.4 5 11.4 Z" fill="#fff"/><path d="M5 11.4 L11.4 5" stroke="#0b3f78" stroke-width="0.8"/></svg>
<span class="t" style="left:597.50px;top:256.80px;font-size:12px;color:#1b1b1b;letter-spacing:0.025px;">Markierung umkehren</span>
<svg style="left:737px;top:219px" width="16" height="16" viewBox="0 0 16 16"><path d="M7.6 0.5 V15.5" stroke="#0b3f78" stroke-width="1.2"/><path d="M1.6 5 H4.4 V7.6 H6 L3 10.6 L0 7.6 H1.6 Z" fill="#3aa0dc"/><path d="M10.8 11 H13.6 V8.2 H15.2 L12.2 5.2 L9.2 8.2 H10.8 Z" fill="#3aa0dc"/></svg>
<span class="t" style="left:756.30px;top:216.50px;font-size:12px;color:#1b1b1b;letter-spacing:-0.278px;">Sortieren</span>
<svg style="left:737px;top:259px" width="17" height="17" viewBox="0 0 17 17"><path d="M7.6 0.5 V15.5" stroke="#0b3f78" stroke-width="1.2"/><path d="M1.6 5 H4.4 V7.6 H6 L3 10.6 L0 7.6 H1.6 Z" fill="#3aa0dc"/><path d="M10.8 11 H13.6 V8.2 H15.2 L12.2 5.2 L9.2 8.2 H10.8 Z" fill="#3aa0dc"/><path d="M10.4 11.4 L14.6 15.6 M14.6 11.4 L10.4 15.6" stroke="#d01818" stroke-width="1.2"/></svg>
<span class="t" style="left:756.30px;top:256.80px;font-size:12px;color:#1b1b1b;letter-spacing:-0.071px;">Sortierung aufheben</span>
<svg style="left:888px;top:221px" width="12" height="12" viewBox="0 0 12 12"><path d="M6 0.4 L11.6 6 H7.8 V11.6 H4.2 V6 H0.4 Z" fill="#0b3f78"/></svg>
<span class="t" style="left:905.60px;top:216.50px;font-size:12px;color:#1b1b1b;letter-spacing:-0.202px;">Datensatz nach oben verschieben</span>
<svg style="left:888px;top:261px" width="12" height="12" viewBox="0 0 12 12"><path d="M6 11.6 L11.6 6 H7.8 V0.4 H4.2 V6 H0.4 Z" fill="#0b3f78"/></svg>
<span class="t" style="left:905.60px;top:256.80px;font-size:12px;color:#1b1b1b;letter-spacing:-0.178px;">Datensatz nach unten verschieben</span>
<span class="t" style="left:678.70px;top:291.50px;font-size:12px;color:#9c9c9c;letter-spacing:-0.345px;">Bearbeiten</span>
<svg style="left:1122px;top:220px" width="12" height="14" viewBox="0 0 12 14"><path d="M1.2 0.8 H7.4 L10.6 4 V13 H1.2 Z" fill="#fff" stroke="#0b3f78" fill="none" stroke-width="1.2"/><path d="M7.4 0.8 V4 H10.6" stroke="#0b3f78" fill="none" stroke-width="1.2" style="stroke-width:0.9"/></svg>
<span class="t" style="left:1139.60px;top:216.50px;font-size:12px;color:#1b1b1b;letter-spacing:-0.287px;">Neue Tabelle</span>
<svg style="left:1122px;top:260px" width="13" height="14" viewBox="0 0 13 14"><path d="M0.8 1 L11.6 13 M11.4 0.8 L1 12.6" stroke="#c41a1a" stroke-width="1.4" fill="none"/></svg>
<span class="t" style="left:1139.60px;top:256.80px;font-size:12px;color:#1b1b1b;letter-spacing:-0.269px;">Tabelle löschen</span>
<svg style="left:1233px;top:220px" width="16" height="13" viewBox="0 0 16 13"><rect x="0.8" y="1.4" width="14" height="10" fill="#fff" stroke="#0b3f78" fill="none" stroke-width="1.2"/><path d="M3.4 3.6 H6 M4.7 3.6 V9.2 M3.4 9.2 H6" stroke="#3aa0dc" stroke-width="1" fill="none"/></svg>
<span class="t" style="left:1252.50px;top:216.50px;font-size:12px;color:#1b1b1b;letter-spacing:-0.129px;">Tabelle umbenennen</span>
<svg style="left:1232px;top:259px" width="17" height="17" viewBox="0 0 17 17"><rect x="1" y="1.6" width="5" height="12" fill="#fff" stroke="#0b3f78" fill="none" stroke-width="1.2"/><rect x="1" y="1" width="5" height="2.2" fill="#3aa0dc"/><rect x="8.6" y="3.6" width="5" height="12" fill="#fff" stroke="#0b3f78" fill="none" stroke-width="1.2"/><rect x="8.6" y="3" width="5" height="2.2" fill="#3aa0dc"/><rect x="13" y="1.6" width="3.2" height="10" fill="none" stroke="#0b3f78" fill="none" stroke-width="1.2"/><path d="M6.4 14.8 H8 M14.4 14 H16" stroke="#3aa0dc" stroke-width="1"/></svg>
<span class="t" style="left:1252.50px;top:256.80px;font-size:12px;color:#1b1b1b;letter-spacing:-0.037px;">Umstrukturieren</span>
<svg style="left:1383px;top:219px" width="18" height="17" viewBox="0 0 18 17"><path d="M4 9 L5.4 1.4 H10.6 L13 4 L13.8 9" fill="#fff" stroke="#0b3f78" fill="none" stroke-width="1.2"/><rect x="1.2" y="9" width="15" height="4" fill="#fff" stroke="#0b3f78" fill="none" stroke-width="1.2"/><path d="M2.4 15.4 H15" stroke="#0b3f78" fill="none" stroke-width="1.2"/></svg>
<span class="t" style="left:1403.30px;top:216.50px;font-size:12px;color:#1b1b1b;letter-spacing:-0.227px;">Drucken</span>
<svg style="left:1384px;top:259px" width="17" height="17" viewBox="0 0 17 17"><rect x="4" y="1" width="8" height="3.4" fill="#fff" stroke="#0b3f78" fill="none" stroke-width="1.2"/><rect x="0.8" y="4.6" width="14.6" height="7" fill="#0b3f78"/><rect x="3.6" y="9" width="9" height="6" fill="#fff" stroke="#3aa0dc" stroke-width="1.2"/><path d="M5.6 11.2 H10.6 M5.6 13 H9" stroke="#3aa0dc" stroke-width="0.9"/></svg>
<span class="t" style="left:1403.30px;top:256.80px;font-size:12px;color:#1b1b1b;letter-spacing:-0.042px;">Formularansicht drucken</span>
<svg style="left:1556px;top:218px" width="18" height="18" viewBox="0 0 18 18"><rect x="0.8" y="0.8" width="14.6" height="11" fill="#fff" stroke="#0b3f78" fill="none" stroke-width="1.2"/><path d="M3 3.6 H7 M9 3.6 H13.4 M3 6 H7 M9 6 H13.4 M3 8.4 H7 M9 8.4 H11.6" stroke="#0b3f78" stroke-width="0.9"/><path d="M16.6 14 H11.6" stroke="#3aa0dc" stroke-width="1.7" fill="none"/><path d="M13.2 11.2 L10.2 14 L13.2 16.8 Z" fill="#3aa0dc"/></svg>
<svg style="left:1556px;top:258px" width="18" height="18" viewBox="0 0 18 18"><rect x="0.8" y="0.8" width="14.6" height="11" fill="#fff" stroke="#0b3f78" fill="none" stroke-width="1.2"/><path d="M3 3.6 H7 M9 3.6 H13.4 M3 6 H7 M9 6 H13.4 M3 8.4 H7 M9 8.4 H11.6" stroke="#0b3f78" stroke-width="0.9"/><path d="M10.6 14 H15" stroke="#3aa0dc" stroke-width="1.7" fill="none"/><path d="M14 11.2 L17 14 L14 16.8 Z" fill="#3aa0dc"/></svg>
<span class="t" style="left:1328.90px;top:291.70px;font-size:12px;color:#9c9c9c;letter-spacing:-0.433px;">Tabelle</span>
<svg style="left:312px;top:330px" width="17" height="14" viewBox="0 0 17 14"><rect x="0.6" y="0.6" width="15.6" height="12.8" fill="#fff" stroke="#0b3f78" stroke-width="1.1"/><rect x="5.4" y="1.2" width="10.3" height="2.8" fill="#8fa9d6"/><path d="M1 4.2 H16 M1 7.1 H16 M1 10 H16 M5.2 1 V13" stroke="#5f86c2" stroke-width="0.8" fill="none"/></svg>
<span class="t" style="left:333.30px;top:327.20px;font-size:12px;color:#1b1b1b;font-weight:bold;letter-spacing:-0.097px;">verfügbare Tabelle(n):</span>
<svg style="left:319px;top:362px" width="14" height="13" viewBox="0 0 14 13"><path d="M0.6 4.2 H6.4 V0.4 L13 6.2 L6.4 12 V8.2 H0.6 Z" fill="#1fb51f"/></svg>
<span class="t" style="left:341.25px;top:358.50px;font-size:12px;color:#1b1b1b;letter-spacing:-0.224px;">Personendaten</span>
<span class="t" style="left:341.25px;top:382.00px;font-size:12px;color:#1b1b1b;letter-spacing:-0.160px;">Baubeschreibung</span>
<svg style="left:520px;top:628px" width="6" height="10" viewBox="0 0 6 10"><rect x="0.5" y="0.5" width="1.4" height="1.4" fill="#9a9a9a"/><rect x="0.5" y="3.8" width="1.4" height="1.4" fill="#9a9a9a"/><rect x="0.5" y="7.1" width="1.4" height="1.4" fill="#9a9a9a"/><rect x="3.5" y="0.5" width="1.4" height="1.4" fill="#9a9a9a"/><rect x="3.5" y="3.8" width="1.4" height="1.4" fill="#9a9a9a"/><rect x="3.5" y="7.1" width="1.4" height="1.4" fill="#9a9a9a"/></svg>
<svg style="left:1274px;top:628px" width="6" height="10" viewBox="0 0 6 10"><rect x="0.5" y="0.5" width="1.4" height="1.4" fill="#9a9a9a"/><rect x="0.5" y="3.8" width="1.4" height="1.4" fill="#9a9a9a"/><rect x="0.5" y="7.1" width="1.4" height="1.4" fill="#9a9a9a"/><rect x="3.5" y="0.5" width="1.4" height="1.4" fill="#9a9a9a"/><rect x="3.5" y="3.8" width="1.4" height="1.4" fill="#9a9a9a"/><rect x="3.5" y="7.1" width="1.4" height="1.4" fill="#9a9a9a"/></svg>
<div style="left:544px;top:314px;width:72px;height:26px;background:#0f9b96;border-radius:4px 4px 0 0"></div>
<span class="t" style="left:552.50px;top:316.80px;font-size:10.5px;color:#fff;letter-spacing:-0.446px;">Listenansicht</span>
<div style="left:617px;top:315px;width:74px;height:25px;background:#fafafa;border:1px solid #dcdcdc;border-bottom:none;border-radius:4px 4px 0 0"></div>
<span class="t" style="left:626.50px;top:317.80px;font-size:10.5px;color:#222;letter-spacing:-0.446px;">Baumansicht</span>
<div style="left:527px;top:339px;width:746px;height:614px;background:#fff;border:1px solid #d0d0d0;box-shadow:0 1px 3px rgba(0,0,0,.18)"></div>
<div style="left:541px;top:353px;width:348px;height:26px;background:#fff;border:1px solid #8e8e8e;border-radius:4px"></div>
<span class="t" style="left:549.40px;top:356.40px;font-size:12px;color:#5a5a5a;letter-spacing:0.226px;">Bitten geben Sie hier ihren Suchbegriff ein...</span>
<div style="left:893px;top:353px;width:65px;height:26px;background:#fff;border:1px solid #dcdcdc;border-radius:4px"></div>
<span class="t" style="left:905.60px;top:356.60px;font-size:12px;color:#222;letter-spacing:-0.201px;">Suchen</span>
<div style="left:962px;top:353px;width:62px;height:26px;background:#fff;border:1px solid #dcdcdc;border-radius:4px"></div>
<span class="t" style="left:974.40px;top:356.60px;font-size:12px;color:#222;letter-spacing:-0.062px;">Leeren</span>
<span class="t" style="left:537.50px;top:399.50px;font-size:12px;color:#c2c2c2;letter-spacing:0.100px;">Um nach einer Spalte zu gruppieren, ziehen Sie die Spaltenüberschrift hierhin.</span>
<svg style="left:1258px;top:345px" width="9" height="7" viewBox="0 0 9 7"><path d="M4.5 0.8 L8.2 6 H0.8 Z" fill="#9a9a9a"/></svg>
<div style="left:1259px;top:358px;width:7px;height:44px;background:#8c8c8c;border-radius:4px"></div>
<svg style="left:1258px;top:912px" width="9" height="7" viewBox="0 0 9 7"><path d="M4.5 6 L8.2 0.8 H0.8 Z" fill="#9a9a9a"/></svg>
<div style="left:528px;top:426px;width:726px;height:32px;background:#f8f8f8;border-top:1px solid #e2e2e2;border-bottom:1px solid #dedede"></div>
<div style="left:568px;top:427px;width:1px;height:30px;background:#e0e0e0"></div>
<div style="left:749px;top:427px;width:1px;height:30px;background:#e0e0e0"></div>
<div style="left:906px;top:427px;width:1px;height:30px;background:#e0e0e0"></div>
<div style="left:1037px;top:427px;width:1px;height:30px;background:#e0e0e0"></div>
<div style="left:1214px;top:427px;width:1px;height:30px;background:#e0e0e0"></div>
<span class="t" style="left:576.25px;top:432.20px;font-size:12px;color:#222;letter-spacing:-0.454px;">Name</span>
<span class="t" style="left:757.50px;top:432.20px;font-size:12px;color:#222;letter-spacing:-0.019px;">Vorname</span>
<span class="t" style="left:915.20px;top:432.20px;font-size:12px;color:#222;letter-spacing:0.153px;">Titel</span>
<span class="t" style="left:1045.50px;top:432.20px;font-size:12px;color:#222;letter-spacing:-0.794px;">Firma</span>
<span class="t" style="left:1222.30px;top:432.20px;font-size:12px;color:#222;letter-spacing:-0.794px;">Firma</span>
<div style="left:569px;top:458px;width:685px;height:22px;background:#f0f0f0"></div>
<div style="left:569px;top:480px;width:685px;height:1px;background:#e2e2e2"></div>
<div style="left:529px;top:458px;width:39px;height:22px;background:#f7f7f7"></div>
<div style="left:528px;top:480px;width:40px;height:1px;background:#e0e0e0"></div>
<span class="t" style="left:545.16px;top:460.00px;font-size:12px;color:#222;">1</span>
<span class="t" style="left:591.25px;top:460.00px;font-size:12px;color:#1b1b1b;letter-spacing:-0.323px;">Keiler</span>
<span class="t" style="left:754.40px;top:460.00px;font-size:12px;color:#1b1b1b;letter-spacing:-0.150px;">Moritz</span>
<span class="t" style="left:1042.30px;top:460.00px;font-size:12px;color:#1b1b1b;letter-spacing:-0.150px;">Keiler Software</span>
<div style="left:569px;top:503px;width:685px;height:1px;background:#e2e2e2"></div>
<div style="left:529px;top:482px;width:39px;height:21px;background:#f7f7f7"></div>
<div style="left:528px;top:503px;width:40px;height:1px;background:#e0e0e0"></div>
<span class="t" style="left:545.16px;top:483.00px;font-size:12px;color:#222;">2</span>
<span class="t" style="left:591.25px;top:483.00px;font-size:12px;color:#1b1b1b;letter-spacing:-0.150px;">Winter</span>
<span class="t" style="left:754.40px;top:483.00px;font-size:12px;color:#1b1b1b;letter-spacing:-0.150px;">Matthias</span>
<span class="t" style="left:911.30px;top:483.00px;font-size:12px;color:#1b1b1b;letter-spacing:-0.150px;">Dr.</span>
<div style="left:569px;top:504px;width:685px;height:22px;background:#f0f0f0"></div>
<div style="left:569px;top:526px;width:685px;height:1px;background:#e2e2e2"></div>
<div style="left:529px;top:505px;width:39px;height:21px;background:#f7f7f7"></div>
<div style="left:528px;top:526px;width:40px;height:1px;background:#e0e0e0"></div>
<span class="t" style="left:545.16px;top:506.00px;font-size:12px;color:#222;">3</span>
<span class="t" style="left:591.25px;top:506.00px;font-size:12px;color:#1b1b1b;letter-spacing:-0.150px;">Kühne</span>
<span class="t" style="left:754.40px;top:506.00px;font-size:12px;color:#1b1b1b;letter-spacing:-0.150px;">Leif</span>
<span class="t" style="left:911.30px;top:506.00px;font-size:12px;color:#1b1b1b;letter-spacing:-0.150px;">Dr.</span>
<span class="t" style="left:1042.30px;top:506.00px;font-size:12px;color:#1b1b1b;letter-spacing:-0.150px;">P&amp;S Gruppe</span>
<div style="left:569px;top:549px;width:685px;height:1px;background:#e2e2e2"></div>
<div style="left:529px;top:528px;width:39px;height:21px;background:#f7f7f7"></div>
<div style="left:528px;top:549px;width:40px;height:1px;background:#e0e0e0"></div>
<span class="t" style="left:545.16px;top:529.00px;font-size:12px;color:#222;">4</span>
<span class="t" style="left:591.25px;top:529.00px;font-size:12px;color:#1b1b1b;letter-spacing:-0.150px;">Peschke</span>
<span class="t" style="left:754.40px;top:529.00px;font-size:12px;color:#1b1b1b;letter-spacing:-0.150px;">Richard</span>
<span class="t" style="left:911.30px;top:529.00px;font-size:12px;color:#1b1b1b;letter-spacing:0.094px;">Dipl. Ing.</span>
<span class="t" style="left:1042.30px;top:529.00px;font-size:12px;color:#1b1b1b;letter-spacing:-0.239px;">Knauer GmbH &amp; CO KG</span>
<span class="t" style="left:1219.00px;top:529.00px;font-size:12px;color:#1b1b1b;letter-spacing:-0.150px;">Sicherh</span>
<div style="left:1254px;top:527px;width:10px;height:22px;background:#fff"></div>
<div style="left:569px;top:550px;width:685px;height:22px;background:#f0f0f0"></div>
<div style="left:569px;top:572px;width:685px;height:1px;background:#e2e2e2"></div>
<div style="left:529px;top:551px;width:39px;height:21px;background:#f7f7f7"></div>
<div style="left:528px;top:572px;width:40px;height:1px;background:#e0e0e0"></div>
<span class="t" style="left:545.16px;top:552.00px;font-size:12px;color:#222;">5</span>
<span class="t" style="left:591.25px;top:552.00px;font-size:12px;color:#1b1b1b;letter-spacing:-0.150px;">Knauer</span>
<span class="t" style="left:754.40px;top:552.00px;font-size:12px;color:#1b1b1b;letter-spacing:-0.150px;">Gisela</span>
<span class="t" style="left:1042.30px;top:552.00px;font-size:12px;color:#1b1b1b;letter-spacing:-0.239px;">Knauer GmbH &amp; CO KG</span>
<span class="t" style="left:1219.00px;top:552.00px;font-size:12px;color:#1b1b1b;letter-spacing:-0.150px;">Sicherh</span>
<div style="left:1254px;top:550px;width:10px;height:22px;background:#fff"></div>
<div style="left:569px;top:595px;width:685px;height:1px;background:#e2e2e2"></div>
<div style="left:529px;top:574px;width:39px;height:21px;background:#f7f7f7"></div>
<div style="left:528px;top:595px;width:40px;height:1px;background:#e0e0e0"></div>
<span class="t" style="left:545.16px;top:575.00px;font-size:12px;color:#222;">6</span>
<span class="t" style="left:591.25px;top:575.00px;font-size:12px;color:#1b1b1b;letter-spacing:-0.150px;">Peetz</span>
<span class="t" style="left:754.40px;top:575.00px;font-size:12px;color:#1b1b1b;letter-spacing:-0.150px;">Jeremie</span>
<div style="left:569px;top:596px;width:685px;height:22px;background:#f0f0f0"></div>
<div style="left:569px;top:618px;width:685px;height:1px;background:#e2e2e2"></div>
<div style="left:529px;top:597px;width:39px;height:21px;background:#f7f7f7"></div>
<div style="left:528px;top:618px;width:40px;height:1px;background:#e0e0e0"></div>
<span class="t" style="left:545.16px;top:598.00px;font-size:12px;color:#222;">7</span>
<span class="t" style="left:591.25px;top:598.00px;font-size:12px;color:#1b1b1b;letter-spacing:-0.150px;">Weiler</span>
<span class="t" style="left:754.40px;top:598.00px;font-size:12px;color:#1b1b1b;letter-spacing:-0.150px;">Alicia</span>
<span class="t" style="left:1042.30px;top:598.00px;font-size:12px;color:#1b1b1b;letter-spacing:-0.118px;">Weiler GmbH</span>
<div style="left:569px;top:641px;width:685px;height:1px;background:#e2e2e2"></div>
<div style="left:529px;top:620px;width:39px;height:21px;background:#f7f7f7"></div>
<div style="left:528px;top:641px;width:40px;height:1px;background:#e0e0e0"></div>
<span class="t" style="left:545.16px;top:621.00px;font-size:12px;color:#222;">8</span>
<span class="t" style="left:591.25px;top:621.00px;font-size:12px;color:#1b1b1b;letter-spacing:-0.150px;">Kilian</span>
<span class="t" style="left:754.40px;top:621.00px;font-size:12px;color:#1b1b1b;letter-spacing:-0.150px;">Kristine</span>
<span class="t" style="left:1042.30px;top:621.00px;font-size:12px;color:#1b1b1b;letter-spacing:-0.244px;">Brandschutz Kilian</span>
<div style="left:569px;top:642px;width:685px;height:22px;background:#f0f0f0"></div>
<div style="left:569px;top:664px;width:685px;height:1px;background:#e2e2e2"></div>
<div style="left:529px;top:643px;width:39px;height:21px;background:#f7f7f7"></div>
<div style="left:528px;top:664px;width:40px;height:1px;background:#e0e0e0"></div>
<span class="t" style="left:545.16px;top:644.00px;font-size:12px;color:#222;">9</span>
<span class="t" style="left:591.25px;top:644.00px;font-size:12px;color:#1b1b1b;letter-spacing:-0.150px;">BrandName</span>
<span class="t" style="left:754.40px;top:644.00px;font-size:12px;color:#1b1b1b;letter-spacing:-0.150px;">BrandVorname</span>
<span class="t" style="left:911.30px;top:644.00px;font-size:12px;color:#1b1b1b;letter-spacing:-0.329px;">TitelBR</span>
<span class="t" style="left:1042.30px;top:644.00px;font-size:12px;color:#1b1b1b;letter-spacing:-0.419px;">BrandFirma</span>
<div style="left:569px;top:687px;width:685px;height:1px;background:#e2e2e2"></div>
<div style="left:529px;top:666px;width:39px;height:21px;background:#f7f7f7"></div>
<div style="left:528px;top:687px;width:40px;height:1px;background:#e0e0e0"></div>
<span class="t" style="left:541.82px;top:667.00px;font-size:12px;color:#222;">10</span>
<span class="t" style="left:591.25px;top:667.00px;font-size:12px;color:#1b1b1b;letter-spacing:-0.150px;">BevollmächtName</span>
<span class="t" style="left:754.40px;top:667.00px;font-size:12px;color:#1b1b1b;letter-spacing:-0.150px;">BevollmächtVorname</span>
<span class="t" style="left:911.30px;top:667.00px;font-size:12px;color:#1b1b1b;letter-spacing:-0.150px;">TitelBV</span>
<span class="t" style="left:1042.30px;top:667.00px;font-size:12px;color:#1b1b1b;letter-spacing:-0.227px;">BevollmächtFirma</span>
<div style="left:569px;top:688px;width:685px;height:22px;background:#f0f0f0"></div>
<div style="left:569px;top:710px;width:685px;height:1px;background:#e2e2e2"></div>
<div style="left:529px;top:689px;width:39px;height:21px;background:#f7f7f7"></div>
<div style="left:528px;top:710px;width:40px;height:1px;background:#e0e0e0"></div>
<span class="t" style="left:542.27px;top:690.00px;font-size:12px;color:#222;">11</span>
<span class="t" style="left:591.25px;top:690.00px;font-size:12px;color:#1b1b1b;letter-spacing:-0.150px;">AntragName</span>
<span class="t" style="left:754.40px;top:690.00px;font-size:12px;color:#1b1b1b;letter-spacing:-0.150px;">AntragVorname</span>
<span class="t" style="left:911.30px;top:690.00px;font-size:12px;color:#1b1b1b;letter-spacing:-0.150px;">TitelAntr</span>
<span class="t" style="left:1042.30px;top:690.00px;font-size:12px;color:#1b1b1b;letter-spacing:-0.150px;">AntragFirm</span>
<div style="left:569px;top:733px;width:685px;height:1px;background:#e2e2e2"></div>
<div style="left:529px;top:712px;width:39px;height:21px;background:#f7f7f7"></div>
<div style="left:528px;top:733px;width:40px;height:1px;background:#e0e0e0"></div>
<span class="t" style="left:541.82px;top:713.00px;font-size:12px;color:#222;">12</span>
<div style="left:569px;top:734px;width:685px;height:22px;background:#f0f0f0"></div>
<div style="left:569px;top:756px;width:685px;height:1px;background:#e2e2e2"></div>
<div style="left:529px;top:735px;width:39px;height:21px;background:#f7f7f7"></div>
<div style="left:528px;top:756px;width:40px;height:1px;background:#e0e0e0"></div>
<span class="t" style="left:541.82px;top:736.00px;font-size:12px;color:#222;">13</span>
<span class="t" style="left:591.25px;top:736.00px;font-size:12px;color:#1b1b1b;letter-spacing:-0.150px;">SachverstName</span>
<span class="t" style="left:754.40px;top:736.00px;font-size:12px;color:#1b1b1b;letter-spacing:-0.150px;">SachverstVorname</span>
<span class="t" style="left:911.30px;top:736.00px;font-size:12px;color:#1b1b1b;letter-spacing:-0.150px;">TitelSV</span>
<span class="t" style="left:1042.30px;top:736.00px;font-size:12px;color:#1b1b1b;letter-spacing:-0.150px;">SachverstFirma</span>
<div style="left:569px;top:779px;width:685px;height:1px;background:#e2e2e2"></div>
<div style="left:529px;top:758px;width:39px;height:21px;background:#f7f7f7"></div>
<div style="left:528px;top:779px;width:40px;height:1px;background:#e0e0e0"></div>
<span class="t" style="left:541.82px;top:759.00px;font-size:12px;color:#0a0a50;font-weight:bold;">14</span>
<span class="t" style="left:591.25px;top:759.00px;font-size:12px;color:#1b1b1b;letter-spacing:-0.150px;">Müller</span>
<span class="t" style="left:754.40px;top:759.00px;font-size:12px;color:#1b1b1b;letter-spacing:-0.150px;">Gerd</span>
<span class="t" style="left:911.30px;top:759.00px;font-size:12px;color:#1b1b1b;letter-spacing:-0.150px;">Bauingenieur</span>
<span class="t" style="left:1042.30px;top:759.00px;font-size:12px;color:#1b1b1b;letter-spacing:-0.150px;">Hoch- und Tiefbau</span>
<span class="t" style="left:1219.00px;top:759.00px;font-size:12px;color:#1b1b1b;letter-spacing:-0.150px;">AG</span>
<div style="left:569px;top:780px;width:685px;height:22px;background:#f0f0f0"></div>
<div style="left:569px;top:802px;width:685px;height:1px;background:#e2e2e2"></div>
<div style="left:529px;top:781px;width:39px;height:21px;background:#f7f7f7"></div>
<div style="left:528px;top:802px;width:40px;height:1px;background:#e0e0e0"></div>
<span class="t" style="left:541.82px;top:782.00px;font-size:12px;color:#222;">15</span>
<span class="t" style="left:591.25px;top:782.00px;font-size:12px;color:#1b1b1b;letter-spacing:-0.150px;">Meyer</span>
<span class="t" style="left:754.40px;top:782.00px;font-size:12px;color:#1b1b1b;letter-spacing:-0.150px;">Fred</span>
<span class="t" style="left:911.30px;top:782.00px;font-size:12px;color:#1b1b1b;letter-spacing:-0.150px;">SiGekoordinator</span>
<span class="t" style="left:1042.30px;top:782.00px;font-size:12px;color:#1b1b1b;letter-spacing:-0.150px;">Büro Meyer</span>
<div style="left:569px;top:825px;width:685px;height:1px;background:#e2e2e2"></div>
<div style="left:529px;top:804px;width:39px;height:21px;background:#f7f7f7"></div>
<div style="left:528px;top:825px;width:40px;height:1px;background:#e0e0e0"></div>
<span class="t" style="left:541.82px;top:805.00px;font-size:12px;color:#222;">16</span>
<span class="t" style="left:591.25px;top:805.00px;font-size:12px;color:#1b1b1b;letter-spacing:-0.150px;">Schneider</span>
<span class="t" style="left:754.40px;top:805.00px;font-size:12px;color:#1b1b1b;letter-spacing:-0.150px;">Kurt</span>
<span class="t" style="left:911.30px;top:805.00px;font-size:12px;color:#1b1b1b;letter-spacing:-0.150px;">Meister</span>
<span class="t" style="left:1042.30px;top:805.00px;font-size:12px;color:#1b1b1b;letter-spacing:-0.150px;">Stahlbau Schneider</span>
<div style="left:569px;top:826px;width:685px;height:22px;background:#f0f0f0"></div>
<div style="left:569px;top:848px;width:685px;height:1px;background:#e2e2e2"></div>
<div style="left:529px;top:827px;width:39px;height:21px;background:#f7f7f7"></div>
<div style="left:528px;top:848px;width:40px;height:1px;background:#e0e0e0"></div>
<span class="t" style="left:541.82px;top:828.00px;font-size:12px;color:#222;">17</span>
<span class="t" style="left:591.25px;top:828.00px;font-size:12px;color:#1b1b1b;letter-spacing:-0.150px;">Lehmann</span>
<span class="t" style="left:754.40px;top:828.00px;font-size:12px;color:#1b1b1b;letter-spacing:-0.150px;">Bernd</span>
<span class="t" style="left:911.30px;top:828.00px;font-size:12px;color:#1b1b1b;letter-spacing:-0.150px;">Meister/Polier</span>
<span class="t" style="left:1042.30px;top:828.00px;font-size:12px;color:#1b1b1b;letter-spacing:-0.150px;">Hoch- und Tiefbau</span>
<span class="t" style="left:1219.00px;top:828.00px;font-size:12px;color:#1b1b1b;letter-spacing:-0.150px;">AG</span>
<div style="left:569px;top:871px;width:685px;height:1px;background:#e2e2e2"></div>
<div style="left:529px;top:850px;width:39px;height:21px;background:#f7f7f7"></div>
<div style="left:528px;top:871px;width:40px;height:1px;background:#e0e0e0"></div>
<span class="t" style="left:541.82px;top:851.00px;font-size:12px;color:#222;">18</span>
<span class="t" style="left:591.25px;top:851.00px;font-size:12px;color:#1b1b1b;letter-spacing:-0.150px;">Richter</span>
<span class="t" style="left:754.40px;top:851.00px;font-size:12px;color:#1b1b1b;letter-spacing:-0.150px;">Hans</span>
<span class="t" style="left:911.30px;top:851.00px;font-size:12px;color:#1b1b1b;letter-spacing:-0.150px;">Meister</span>
<span class="t" style="left:1042.30px;top:851.00px;font-size:12px;color:#1b1b1b;letter-spacing:-0.150px;">Tischlerei Richter</span>
<div style="left:569px;top:872px;width:685px;height:22px;background:#f0f0f0"></div>
<div style="left:569px;top:894px;width:685px;height:1px;background:#e2e2e2"></div>
<div style="left:529px;top:873px;width:39px;height:21px;background:#f7f7f7"></div>
<div style="left:528px;top:894px;width:40px;height:1px;background:#e0e0e0"></div>
<span class="t" style="left:541.82px;top:874.00px;font-size:12px;color:#222;">19</span>
<span class="t" style="left:591.25px;top:874.00px;font-size:12px;color:#1b1b1b;letter-spacing:-0.150px;">Schulze</span>
<span class="t" style="left:754.40px;top:874.00px;font-size:12px;color:#1b1b1b;letter-spacing:-0.150px;">Siegfried</span>
<span class="t" style="left:911.30px;top:874.00px;font-size:12px;color:#1b1b1b;letter-spacing:-0.150px;">Meister</span>
<span class="t" style="left:1042.30px;top:874.00px;font-size:12px;color:#1b1b1b;letter-spacing:-0.150px;">Elektro Nord</span>
<span class="t" style="left:1219.00px;top:874.00px;font-size:12px;color:#1b1b1b;letter-spacing:-0.150px;">GmbH</span>
<div style="left:569px;top:917px;width:685px;height:1px;background:#e2e2e2"></div>
<div style="left:529px;top:896px;width:39px;height:21px;background:#f7f7f7"></div>
<div style="left:528px;top:917px;width:40px;height:1px;background:#e0e0e0"></div>
<span class="t" style="left:541.82px;top:897.00px;font-size:12px;color:#222;">20</span>
<span class="t" style="left:591.25px;top:897.00px;font-size:12px;color:#1b1b1b;letter-spacing:-0.150px;">Meisner</span>
<span class="t" style="left:754.40px;top:897.00px;font-size:12px;color:#1b1b1b;letter-spacing:-0.150px;">Egon</span>
<span class="t" style="left:911.30px;top:897.00px;font-size:12px;color:#1b1b1b;letter-spacing:-0.150px;">Bauingenieur</span>
<span class="t" style="left:1042.30px;top:897.00px;font-size:12px;color:#1b1b1b;letter-spacing:0.072px;">Ingenieurbüro Meisner</span>
<span class="t" style="left:1219.00px;top:897.00px;font-size:12px;color:#1b1b1b;letter-spacing:-0.150px;">mbH</span>
<div style="left:569px;top:918px;width:685px;height:5px;background:#f0f0f0"></div>
<div style="left:529px;top:918px;width:39px;height:5px;background:#f7f7f7"></div>
<div style="left:568px;top:458px;width:1px;height:465px;background:#e0e0e0"></div>
<div style="left:749px;top:458px;width:1px;height:465px;background:#e0e0e0"></div>
<div style="left:906px;top:458px;width:1px;height:465px;background:#e0e0e0"></div>
<div style="left:1037px;top:458px;width:1px;height:465px;background:#e0e0e0"></div>
<div style="left:1214px;top:458px;width:1px;height:465px;background:#e0e0e0"></div>
<div style="left:754px;top:761px;width:1px;height:14px;background:#222"></div>
<div style="left:528px;top:923px;width:744px;height:29px;background:#fff"></div>
<svg style="left:538px;top:932px" width="14" height="11" viewBox="0 0 14 11"><path d="M1.4 1 V10 M7.6 1 L3.6 5.5 L7.6 10 M12.4 1 L8.4 5.5 L12.4 10" stroke="#333" fill="none" stroke-width="1.1"/></svg>
<svg style="left:571px;top:932px" width="12" height="11" viewBox="0 0 12 11"><path d="M5.6 1 L1.6 5.5 L5.6 10 M10.4 1 L6.4 5.5 L10.4 10" stroke="#333" fill="none" stroke-width="1.1"/></svg>
<svg style="left:605px;top:932px" width="8" height="11" viewBox="0 0 8 11"><path d="M6 1 L2 5.5 L6 10" stroke="#333" fill="none" stroke-width="1.1"/></svg>
<span class="t" style="left:632.50px;top:928.00px;font-size:12px;color:#222;letter-spacing:0.211px;">14 von 247</span>
<svg style="left:714px;top:932px" width="8" height="11" viewBox="0 0 8 11"><path d="M2 1 L6 5.5 L2 10" stroke="#333" fill="none" stroke-width="1.1"/></svg>
<svg style="left:744px;top:932px" width="12" height="11" viewBox="0 0 12 11"><path d="M1.6 1 L5.6 5.5 L1.6 10 M6.4 1 L10.4 5.5 L6.4 10" stroke="#333" fill="none" stroke-width="1.1"/></svg>
<svg style="left:775px;top:932px" width="15" height="11" viewBox="0 0 15 11"><path d="M1.6 1 L5.6 5.5 L1.6 10 M6.4 1 L10.4 5.5 L6.4 10 M13 1 V10" stroke="#333" fill="none" stroke-width="1.1"/></svg>
<svg style="left:807px;top:931px" width="15" height="13" viewBox="0 0 15 13"><path d="M1 1 H13.6 L8.6 6.8 V12 L6 10.4 V6.8 Z" stroke="#333" fill="none" stroke-width="1.1" stroke-linejoin="round"/></svg>
<svg style="left:884px;top:933px" width="8" height="8" viewBox="0 0 8 8"><path d="M0.8 4 L7 0.8 V7.2 Z" fill="#8c8c8c"/></svg>
<div style="left:897px;top:928px;width:56px;height:18px;background:#a0a0a0;border-radius:7px"></div>
<svg style="left:1242px;top:933px" width="8" height="8" viewBox="0 0 8 8"><path d="M7.2 4 L1 0.8 V7.2 Z" fill="#8c8c8c"/></svg>
<div style="left:1281px;top:313px;width:367px;height:640px;background:#fff;border-left:1px solid #e0e0e0;border-top:1px solid #e6e6e6"></div>
<div style="left:1289px;top:321px;width:355px;height:624px;background:#f4f4f4"></div>
<div style="left:1292px;top:929px;width:349px;height:14px;background:#fff"></div>
<div style="left:1274px;top:952px;width:377px;height:1px;background:#e8e8e8"></div>
<svg style="left:1461px;top:932px" width="10" height="8" viewBox="0 0 10 8"><path d="M5 7 L9 1 H1 Z" fill="#8c8c8c"/></svg>
<span class="t" style="left:1294.60px;top:325.60px;font-size:12px;color:#222;">Name:</span>
<span class="t" style="left:1457.50px;top:325.60px;font-size:12px;color:#222;">Müller</span>
<span class="t" style="left:1294.60px;top:347.60px;font-size:12px;color:#222;">Vorname:</span>
<span class="t" style="left:1457.50px;top:347.60px;font-size:12px;color:#222;">Gerd</span>
<span class="t" style="left:1294.60px;top:369.60px;font-size:12px;color:#222;">Titel:</span>
<span class="t" style="left:1457.50px;top:369.60px;font-size:12px;color:#222;">Bauingenieur</span>
<span class="t" style="left:1294.60px;top:391.60px;font-size:12px;color:#222;">Firma:</span>
<span class="t" style="left:1457.50px;top:391.60px;font-size:12px;color:#222;">Hoch- und Tiefbau</span>
<span class="t" style="left:1294.60px;top:413.60px;font-size:12px;color:#222;">Firma (Zusatz):</span>
<span class="t" style="left:1457.50px;top:413.60px;font-size:12px;color:#222;">AG</span>
<span class="t" style="left:1294.60px;top:435.60px;font-size:12px;color:#222;">Branche:</span>
<span class="t" style="left:1457.50px;top:435.60px;font-size:12px;color:#222;">Bau</span>
<span class="t" style="left:1294.60px;top:457.60px;font-size:12px;color:#222;">Straße:</span>
<span class="t" style="left:1457.50px;top:457.60px;font-size:12px;color:#222;">Südstrasse</span>
<span class="t" style="left:1294.60px;top:479.60px;font-size:12px;color:#222;">HausNr:</span>
<span class="t" style="left:1457.50px;top:479.60px;font-size:12px;color:#222;">12</span>
<span class="t" style="left:1294.60px;top:501.60px;font-size:12px;color:#222;">PLZ:</span>
<span class="t" style="left:1457.50px;top:501.60px;font-size:12px;color:#222;">01705</span>
<span class="t" style="left:1294.60px;top:523.60px;font-size:12px;color:#222;">Ort:</span>
<span class="t" style="left:1457.50px;top:523.60px;font-size:12px;color:#222;">Freital</span>
<span class="t" style="left:1294.60px;top:545.60px;font-size:12px;color:#222;">Telefon:</span>
<span class="t" style="left:1457.50px;top:545.60px;font-size:12px;color:#222;">0351/96314785</span>
<span class="t" style="left:1294.60px;top:567.60px;font-size:12px;color:#222;">Fax:</span>
<span class="t" style="left:1457.50px;top:567.60px;font-size:12px;color:#222;">0351/8521346</span>
<span class="t" style="left:1294.60px;top:589.60px;font-size:12px;color:#222;">E-Mail:</span>
<span class="t" style="left:1457.50px;top:589.60px;font-size:12px;color:#222;letter-spacing:0.203px;">hochtief@bau-gmbh.de</span>
<span class="t" style="left:1294.60px;top:611.60px;font-size:12px;color:#222;">Mobil:</span>
<span class="t" style="left:1457.50px;top:611.60px;font-size:12px;color:#222;">017245678912</span>
<span class="t" style="left:1294.60px;top:633.60px;font-size:12px;color:#222;">Berufsbezeichnung:</span>
<span class="t" style="left:1457.50px;top:633.60px;font-size:12px;color:#222;">Bauleiter</span>
<span class="t" style="left:1294.60px;top:654.00px;font-size:12px;color:#222;letter-spacing:0.141px;">Listennr. / Mitgliedsnummer:</span>
<span class="t" style="left:1294.60px;top:672.00px;font-size:12px;color:#222;">Stammdaten:</span>
<span class="t" style="left:1294.60px;top:690.00px;font-size:12px;color:#222;">Firmennummer:</span>
<span class="t" style="left:1294.60px;top:708.00px;font-size:12px;color:#222;">Datum:</span>
<span class="t" style="left:1294.60px;top:726.00px;font-size:12px;color:#222;">Anrede:</span>
<span class="t" style="left:1294.60px;top:744.00px;font-size:12px;color:#222;">Kategorie:</span>
<span class="t" style="left:1294.60px;top:762.00px;font-size:12px;color:#222;">Land:</span>
<span class="t" style="left:1294.60px;top:780.00px;font-size:12px;color:#222;">Rubrik:</span>
<span class="t" style="left:1294.60px;top:798.00px;font-size:12px;color:#222;">Webseite:</span>
<span class="t" style="left:1294.60px;top:817.50px;font-size:12px;color:#222;">Nachweise:</span>
<span class="t" style="left:1294.60px;top:837.50px;font-size:12px;color:#222;">Geburtstag:</span>
<span class="t" style="left:1294.60px;top:855.60px;font-size:12px;color:#222;">Anrede:</span>
<span class="t" style="left:1294.60px;top:873.60px;font-size:12px;color:#222;">Kundennummer:</span>
<span class="t" style="left:1294.60px;top:891.60px;font-size:12px;color:#222;">Debitorennummer:</span>
<span class="t" style="left:1294.60px;top:909.60px;font-size:12px;color:#222;">Kürzel / Alias:</span>
<svg style="left:1624px;top:714px" width="10" height="7" viewBox="0 0 10 7"><path d="M1 1.2 L5 5.2 L9 1.2" fill="none" stroke="#333" stroke-width="1.1"/></svg>
<svg style="left:1624px;top:824px" width="10" height="7" viewBox="0 0 10 7"><path d="M1 1.2 L5 5.2 L9 1.2" fill="none" stroke="#333" stroke-width="1.1"/></svg>
<svg style="left:1624px;top:844px" width="10" height="7" viewBox="0 0 10 7"><path d="M1 1.2 L5 5.2 L9 1.2" fill="none" stroke="#333" stroke-width="1.1"/></svg>
<div style="left:574px;top:957px;width:2px;height:13px;background:#c8c8c8"></div>
<div style="left:1310px;top:957px;width:2px;height:13px;background:#c8c8c8"></div>
<span class="t" style="left:1439.00px;top:953.50px;font-size:11px;color:#222;letter-spacing:-0.038px;">AdressDB-Version: 2025.32.1.1</span>
<div style="left:1593px;top:957px;width:2px;height:13px;background:#c8c8c8"></div>
<div style="left:1632px;top:957px;width:2px;height:13px;background:#c8c8c8"></div>
<svg style="left:1642px;top:966px" width="7" height="7" viewBox="0 0 7 7"><rect x="0" y="0" width="2" height="2" fill="#9c9c9c"/><rect x="0" y="4" width="2" height="2" fill="#9c9c9c"/><rect x="4" y="0" width="2" height="2" fill="#9c9c9c"/><rect x="4" y="4" width="2" height="2" fill="#9c9c9c"/></svg>
</body></html>
